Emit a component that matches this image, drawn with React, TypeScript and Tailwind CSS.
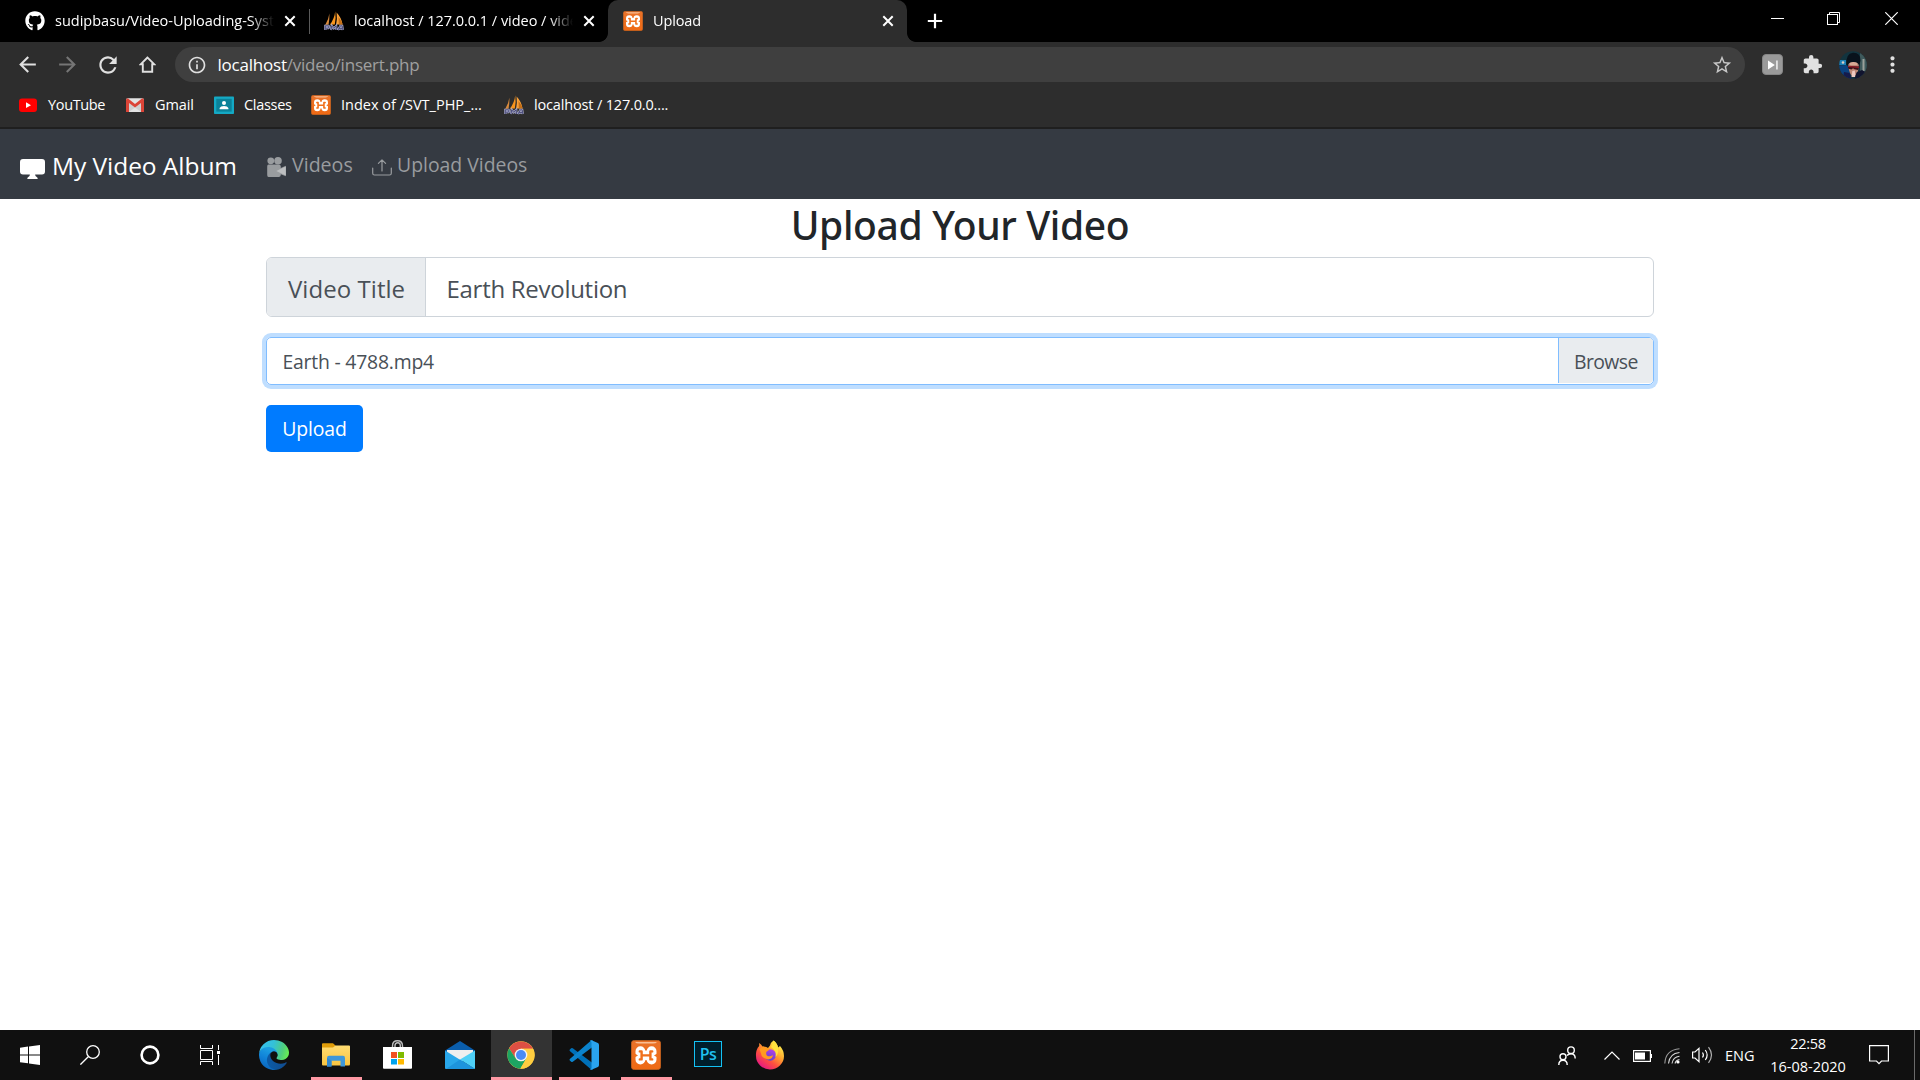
import React from 'react';
import type { ReactNode } from 'react';
import { FaGithub } from 'react-icons/fa';
import { MdArrowBack, MdArrowForward, MdRefresh, MdInfoOutline, MdStarBorder, MdExtension, MdMoreVert } from 'react-icons/md';

function XamppIcon({ className }: { className: string }) {
  return (
    <svg viewBox="0 0 30 30" className={className}>
      <defs>
        <linearGradient id="xa" x1="0" y1="0" x2="0" y2="1">
          <stop offset="0" stopColor="#e9722a" />
          <stop offset="1" stopColor="#ef6a14" />
        </linearGradient>
      </defs>
      <rect x="0.4" y="0.4" width="29.2" height="29.2" rx="3" fill="url(#xa)" stroke="#c9641f" strokeWidth="0.8" />
      <path d="M4 2H26Q25 3.6 22 3.6H8Q5 3.6 4 2Z" fill="#f9bd92" />
      <g fill="none" strokeLinecap="round" strokeLinejoin="round">
        <path d="M9.4 11.2V19.6M20.6 11.2V19.6M10 15.4H20" stroke="#fff" strokeWidth="9.8" />
        <path d="M8.8 11.4H10.6V19.4H8.8M21.2 11.4H19.4V19.4H21.2M10.6 15.4H19.4" stroke="#f0701c" strokeWidth="2.4" />
      </g>
      <path d="M3.4 13.2L7 15.4L3.4 17.6ZM26.6 13.2L23 15.4L26.6 17.6Z" fill="#f0701c" />
    </svg>
  );
}

function SailIcon() {
  return (
    <svg viewBox="0 0 20 20" className="h-5 w-5 shrink-0">
      <path d="M5.4 2.5Q5.6 8 4.6 13.5L1.2 14Q4.6 8.5 5.4 2.5Z" fill="#d98a3c" />
      <path d="M11.2 0.3Q12.3 7 10.8 13.5L5.8 13.8Q10.6 7.5 11.2 0.3Z" fill="#f7941d" />
      <path d="M12.6 1.5Q17.4 6.5 18.6 13.5H12.1Q13.4 8 12.6 1.5Z" fill="#f9a13a" />
      <path d="M14.5 6Q17.6 9.5 18.6 13.5H14.8Z" fill="#c56f16" />
      <path d="M1.3 19V14.8H4.5Q5.6 16 4.4 17.2H1.8M7 19L7.7 14.8L9.8 17.4L12.2 14.8L12.5 19M14 19L16.4 14.8H18.2L18.8 19M15 17.6H18.2" fill="none" stroke="#a9abc9" strokeWidth="2.2" />
      <path d="M1.3 19V14.8H4.5Q5.6 16 4.4 17.2H1.8M7 19L7.7 14.8L9.8 17.4L12.2 14.8L12.5 19M14 19L16.4 14.8H18.2L18.8 19M15 17.6H18.2" fill="none" stroke="#4b4c7c" strokeWidth="1" />
    </svg>
  );
}

function CloseMark() {
  return (
    <svg viewBox="0 0 12 12" className="h-3 w-3">
      <path d="M1.3 1.3L10.7 10.7M10.7 1.3L1.3 10.7" stroke="#fff" strokeWidth="2" />
    </svg>
  );
}

function Tab({ icon, title, active, divider, tracking }: { icon: ReactNode; title: string; active?: boolean; divider?: boolean; tracking: string }) {
  return (
    <div className={`relative flex h-[42px] w-[299px] shrink-0 items-center pl-[15px] ${active ? 'rounded-t-[10px] bg-[#2d2d2d]' : ''}`}>
      {icon}
      <div
        className={`ml-[10px] w-[219px] overflow-hidden text-[14.5px] leading-[22px] whitespace-nowrap text-white [mask-image:linear-gradient(to_right,#000_195px,transparent_219px)] ${tracking}`}
      >
        {title}
      </div>
      <div className="ml-[10px]">
        <CloseMark />
      </div>
      {divider && <div className="absolute top-[9px] right-[-1px] h-[25px] w-px bg-[#5a5a5a]" />}
      {active && (
        <>
          <div className="absolute bottom-0 -left-[9px] h-[9px] w-[9px] bg-[radial-gradient(circle_at_0_0,#000_8.5px,#2d2d2d_9.3px)]" />
          <div className="absolute -right-[9px] bottom-0 h-[9px] w-[9px] bg-[radial-gradient(circle_at_100%_0,#000_8.5px,#2d2d2d_9.3px)]" />
        </>
      )}
    </div>
  );
}

function TabStrip() {
  return (
    <div className="flex h-[42px] items-start bg-black pl-[10px]">
      <Tab icon={<FaGithub className="h-5 w-5 shrink-0 text-white" />} title="sudipbasu/Video-Uploading-System" divider tracking="tracking-normal" />
      <Tab icon={<SailIcon />} title="localhost / 127.0.0.1 / video / video_upload" tracking="tracking-[-0.03px]" />
      <Tab icon={<XamppIcon className="h-5 w-5 shrink-0" />} title="Upload" active tracking="tracking-[-0.15px]" />
      <svg viewBox="0 0 16 16" className="mt-[13px] ml-5 h-4 w-4">
        <path d="M8 0.8V15.2M0.8 8H15.2" stroke="#fff" strokeWidth="2.2" />
      </svg>
      <div className="ml-auto flex h-[37px] items-center">
        <div className="flex w-[57px] justify-center">
          <div className="ml-px h-px w-[13px] bg-white" />
        </div>
        <div className="flex w-[57px] justify-center">
          <svg viewBox="0 0 13 13" className="h-[13px] w-[13px]" fill="none" stroke="#fff">
            <rect x="0.5" y="2.5" width="10" height="10" />
            <path d="M2.5 2.5V0.5H12.5V10.5H10.5" />
          </svg>
        </div>
        <div className="flex w-[58px] justify-center">
          <svg viewBox="0 0 13 13" className="h-[13px] w-[13px]">
            <path d="M0.3 0.3L12.7 12.7M12.7 0.3L0.3 12.7" stroke="#fff" strokeWidth="1.2" />
          </svg>
        </div>
      </div>
    </div>
  );
}

function Cell({ children }: { children: ReactNode }) {
  return <div className="flex h-full w-10 shrink-0 items-center justify-center text-[#e0e0e0]">{children}</div>;
}

function Avatar() {
  return (
    <svg viewBox="0 0 28 28" className="h-7 w-7">
      <defs>
        <clipPath id="av">
          <circle cx="14" cy="14" r="13.8" />
        </clipPath>
      </defs>
      <g clipPath="url(#av)">
        <rect width="28" height="28" fill="#12343f" />
        <path d="M21 2H28V26H21Z" fill="#3f5a5c" />
        <path d="M23.5 8H25.5V20H23.5Z" fill="#9aa09a" />
        <path d="M0 9H7V14H0Z" fill="#1c7fb6" />
        <circle cx="4" cy="11.5" r="1.3" fill="#dccfc8" />
        <path d="M0 14.5L9 14L12 28H0Z" fill="#0b4280" />
        <path d="M9 11.500H20L19.200 19Q17.500 25 14.500 25.500Q11.500 25 10 19Z" fill="#bd8876" />
        <path d="M10.500 10.500H18.500L18 14H11Z" fill="#d9a995" />
        <path d="M7.500 14Q6.500 2.500 14 1.800Q21.500 1.500 21.500 9.500L20.300 15Q19 10.500 14 11Q9.500 11 8.700 15Z" fill="#08121c" />
        <path d="M8.500 14.800L20.500 15.600L19 19L15.500 18.300L14 17.300L12.500 18.500L9.500 17.800Z" fill="#3a1219" />
        <path d="M9 15.500L20 16.300" stroke="#a81d2b" strokeWidth="1" />
        <path d="M13.300 20L15.800 19.500L16.500 26H12.500Z" fill="#ecc9c1" />
        <path d="M17.500 21.500L23 19L28 22V28H15.500Z" fill="#11142e" />
        <path d="M5 21L10.500 22L12.500 28H4Z" fill="#151b4c" />
      </g>
    </svg>
  );
}

function Toolbar() {
  return (
    <div className="flex h-[45px] items-center bg-[#2d2d2d] pl-[7.5px]">
      <Cell><MdArrowBack className="h-[25px] w-[25px]" /></Cell>
      <Cell><MdArrowForward className="h-[25px] w-[25px] text-[#757575]" /></Cell>
      <Cell><MdRefresh className="h-[26px] w-[26px]" /></Cell>
      <Cell>
        <svg viewBox="0 0 17 17" className="h-[17px] w-[17px]">
          <path d="M8.5 1.5L1.8 8.2H3.8V15.8H13.2V8.2H15.2Z" fill="none" stroke="#e0e0e0" strokeWidth="1.9" />
        </svg>
      </Cell>
      <div className="ml-[7.5px] flex h-[35px] w-[1570px] items-center rounded-full bg-[#3f3f3f] pr-[12px] pl-[12px]">
        <MdInfoOutline className="h-[20px] w-[20px] text-[#e0e0e0]" />
        <div className="ml-[10.5px] text-[17px] leading-[24px] tracking-[-0.22px] text-[#a0a0a0]">
          <span className="text-white">localhost</span>/video/insert.php
        </div>
        <MdStarBorder className="ml-auto h-[22px] w-[22px] text-[#c8c8c8]" />
      </div>
      <div className="ml-[7.5px] flex h-full">
        <Cell>
          <div className="flex h-[21px] w-[21px] items-center justify-center rounded-[4px] border border-[#858585] bg-[#9a9a9a]">
            <svg viewBox="0 0 12 10" className="h-[10px] w-3">
              <path d="M1 0.5L7.8 5L1 9.5ZM9.3 0.6H10.6V9.4H9.3Z" fill="#fff" />
            </svg>
          </div>
        </Cell>
        <Cell><MdExtension className="h-[21px] w-[21px]" /></Cell>
        <Cell><Avatar /></Cell>
        <Cell><MdMoreVert className="h-[25px] w-[25px]" /></Cell>
      </div>
    </div>
  );
}

function Bookmark({ icon, label, className }: { icon: ReactNode; label: string; className: string }) {
  return (
    <div className={`flex shrink-0 items-center text-[14.5px] leading-[20px] whitespace-nowrap text-white ${className}`}>
      {icon}
      <span className="ml-[10px]">{label}</span>
    </div>
  );
}

function BookmarksBar() {
  return (
    <div className="flex h-[42px] items-center border-b-2 border-[#1f1f1f] bg-[#2d2d2d] pb-[4px] pl-[18px]">
      <Bookmark
        className="w-[107px] tracking-[-0.35px]"
        label="YouTube"
        icon={
          <svg viewBox="0 0 20 20" className="h-5 w-5">
            <rect x="1" y="3.5" width="18" height="13.5" rx="3" fill="#f00" />
            <path d="M8 7.3V13.1L13 10.2Z" fill="#fff" />
          </svg>
        }
      />
      <Bookmark
        className="w-[89px] tracking-[-0.1px]"
        label="Gmail"
        icon={
          <svg viewBox="0 0 20 20" className="h-5 w-5">
            <rect x="1" y="3.3" width="18" height="13.7" rx="1.5" fill="#e3e3e3" />
            <path d="M4 8L10 12.5L4 17ZM16 8L10 12.5L16 17Z" fill="#cfcfcf" />
            <path d="M1 17V5Q1 3.3 2.8 3.3L10 9L17.2 3.3Q19 3.3 19 5V17H16V8L10 12.6L4 8V17Z" fill="#db4437" />
          </svg>
        }
      />
      <Bookmark
        className="w-[97px] tracking-[-0.3px]"
        label="Classes"
        icon={
          <svg viewBox="0 0 20 20" className="h-5 w-5">
            <rect y="1.5" width="20" height="17.5" rx="0.8" fill="#14a9c4" />
            <rect x="2.3" y="3.8" width="15.4" height="12.8" fill="#0b8299" />
            <circle cx="10" cy="8" r="2" fill="#fff" />
            <path d="M5.6 14.2V13Q6.5 11 10 11Q13.5 11 14.4 13V14.2Z" fill="#fff" />
          </svg>
        }
      />
      <Bookmark className="w-[193px]" label="Index of /SVT_PHP_..." icon={<XamppIcon className="h-5 w-5 shrink-0" />} />
      <Bookmark className="tracking-[-0.16px]" label="localhost / 127.0.0...." icon={<SailIcon />} />
    </div>
  );
}

function SiteNav() {
  return (
    <nav className="flex h-[70px] items-center bg-[#353a42] pl-5">
      <svg viewBox="0 0 25 20" className="mt-[9px] h-5 w-[25px] shrink-0" fill="#fff">
        <path d="M3 0H22Q25 0 25 3V12.5Q25 15.5 22 15.5H3Q0 15.5 0 12.5V3Q0 0 3 0ZM10 15H15Q15 17.5 17 18.2Q18 19 17.6 20H7.4Q7 19 8 18.2Q10 17.5 10 15Z" />
      </svg>
      <div className="mt-[3px] ml-[7px] w-[215px] text-[24.5px] leading-[36px] tracking-[-0.05px] whitespace-nowrap text-white">My Video Album</div>
      <svg viewBox="0 0 20 20" className="mt-[5px] -ml-px h-5 w-5" fill="#999c9f">
        <circle cx="4.8" cy="3.8" r="3.4" />
        <circle cx="12" cy="3.8" r="3.8" />
        <path d="M2.5 7.5H12.8Q14.8 7.7 14.8 9.5V11L19.8 8.7V19.3L14.8 17.2V18Q14.6 20 12.8 20H2.5Q1.2 19.8 1.2 18V9.5Q1.2 7.7 2.5 7.5Z" />
        <path d="M10.3 14L19.8 9.5V18.5Z" fill="#bcbec0" />
      </svg>
      <span className="mt-[2px] ml-[6px] w-[81px] text-[19.6px] leading-[30px] text-[#999c9f]">Videos</span>
      <svg viewBox="0 0 20 17" className="mt-[6px] -ml-px h-[17px] w-5" fill="none" stroke="#999c9f" strokeWidth="1.2" strokeLinecap="round" strokeLinejoin="round">
        <path d="M0.7 9V14.2Q0.7 16 2.5 16H17.5Q19.3 16 19.3 14.2V9M10 12V1M6.4 4.4L10 0.9L13.6 4.4" />
      </svg>
      <span className="mt-[2px] ml-[5px] text-[19.4px] leading-[30px] text-[#999c9f]">Upload Videos</span>
    </nav>
  );
}

function UploadForm() {
  return (
    <main className="mx-auto flex h-[831px] w-[1388px] flex-col items-start">
      <h1 className="mt-[2px] h-[56px] w-full text-center font-['Noto_Sans'] text-[39px] leading-[48px] font-medium tracking-[-0.35px] text-[#212529]">
        Upload Your Video
      </h1>
      <div className="flex h-[60px] w-full overflow-hidden rounded-[6px] border border-[#ced4da] pb-px text-[24px] text-[#495057]">
        <div className="-mb-px flex w-[159px] items-center border-r border-[#ced4da] bg-[#e9ecef] pt-[4px] pl-[21px] tracking-[0.05px]">Video Title</div>
        <div className="-mb-px flex grow items-center pt-[4px] pl-[20.5px] tracking-[-0.28px]">Earth Revolution</div>
      </div>
      <div className="mt-5 flex h-[48px] w-full rounded-[5px] border border-[#80bdff] text-[19.4px] text-[#495057] shadow-[0_0_0_4px_#bfdeff]">
        <div className="flex grow items-center pt-[2px] pl-[15.5px] tracking-[-0.22px]">Earth - 4788.mp4</div>
        <div className="mb-px flex w-[95px] items-center rounded-r-[4px] border-l border-[#80bdff] bg-[#e9ecef] pt-[3px] pl-[15px] tracking-[-0.6px]">Browse</div>
      </div>
      <button className="mt-5 h-[47px] w-[97px] rounded-[5px] bg-[#007bff] text-[19.4px] leading-[46px] tracking-[-0.1px] text-white">Upload</button>
    </main>
  );
}

function TaskButton({ children, active, running }: { children: ReactNode; active?: boolean; running?: boolean }) {
  return (
    <div className="flex h-[50px] w-[62px] justify-center">
      <div
        className={`flex h-full items-center justify-center ${active ? '-ml-px w-[61px] bg-[#333333]' : 'w-[51px]'} ${
          running ? 'border-b-[3px] border-[#ff99a4] pt-[3px]' : ''
        }`}
      >
        {children}
      </div>
    </div>
  );
}

function EdgeIcon() {
  return (
    <svg viewBox="0 0 256 256" className="h-[30px] w-[30px]">
      <defs>
        <linearGradient id="e1" x1="0.2" y1="0.7" x2="1" y2="0.6">
          <stop offset="0" stopColor="#0c59a4" />
          <stop offset="1" stopColor="#114a8b" />
        </linearGradient>
        <linearGradient id="e2" x1="0.6" y1="0.2" x2="0.3" y2="1">
          <stop offset="0" stopColor="#1b9de2" />
          <stop offset="0.5" stopColor="#0f7fd6" />
          <stop offset="1" stopColor="#0c62b8" />
        </linearGradient>
        <linearGradient id="e3" x1="0" y1="0.3" x2="1" y2="0.5">
          <stop offset="0" stopColor="#35c1f1" />
          <stop offset="0.45" stopColor="#34c1d8" />
          <stop offset="0.8" stopColor="#4fce7d" />
          <stop offset="1" stopColor="#66eb55" />
        </linearGradient>
      </defs>
      <path d="M231 190.5a93 93 0 0 1-10.500 4.700 101.900 101.900 0 0 1-35.900 6.500c-47.300 0-88.500-32.500-88.500-74.300a31.500 31.500 0 0 1 16.400-27.300c-42.800 1.800-53.800 46.400-53.800 72.500 0 73.900 68.100 81.400 82.800 81.400 7.900 0 19.800-2.300 27-4.500l1.300-.5a128.300 128.300 0 0 0 66.600-52.800 4 4 0 0 0-5.400-5.700z" fill="url(#e1)" />
      <path d="M105.700 241.400a79.200 79.200 0 0 1-22.700-21.300 80.700 80.700 0 0 1 29.500-120c3.200-1.500 8.500-4.100 15.600-4a32.400 32.400 0 0 1 25.700 13 31.900 31.900 0 0 1 6.300 18.700c0-.2 24.500-79.600-80-79.600-43.900 0-80 41.700-80 78.200a130.200 130.200 0 0 0 12.100 56 128 128 0 0 0 156.400 67 75.500 75.500 0 0 1-62.800-8z" fill="url(#e2)" />
      <path d="M152.300 148.900c-.8 1-3.300 2.500-3.300 5.700 0 2.600 1.700 5.100 4.700 7.200 14.400 10 41.500 8.700 41.600 8.700a59.600 59.600 0 0 0 30.300-8.300 61.400 61.400 0 0 0 30.400-52.900c.3-22.400-8-37.300-11.300-43.900C223.500 23.900 177.700 0 128 0A128 128 0 0 0 0 126.200c.5-36.500 36.800-66 80-66 3.500 0 23.500.3 42 10.100 16.300 8.600 24.900 18.900 30.800 29.200 6.200 10.700 7.300 24.100 7.300 29.500 0 5.300-2.700 13.300-7.800 19.900z" fill="url(#e3)" />
    </svg>
  );
}

function ChromeIcon() {
  return (
    <svg viewBox="0 0 28 28" className="mr-px h-7 w-7">
      <circle cx="14" cy="14" r="13.700" fill="#ffcd40" />
      <path d="M14 14L8.400 17.200L2.100 7.200A13.700 13.700 0 0 1 26 7.700H14Z" fill="#dd4f43" />
      <path d="M2.100 7.200L8.500 17.200L14 20.300L19.500 17.200L13.300 27.700A13.700 13.700 0 0 1 2.100 7.200Z" fill="#1da462" />
      <path d="M14 7.700H26A13.700 13.700 0 0 1 13.300 27.700L19.500 17.200Z" fill="#ffcd40" />
      <circle cx="14" cy="14" r="6.300" fill="#f3f3f3" />
      <circle cx="14" cy="14" r="5" fill="#4a8af4" />
    </svg>
  );
}

function FirefoxIcon() {
  return (
    <svg viewBox="0 0 30 30" className="h-[30px] w-[30px]">
      <defs>
        <linearGradient id="f1" x1="0.85" y1="0.1" x2="0.2" y2="0.95">
          <stop offset="0" stopColor="#fff44f" />
          <stop offset="0.35" stopColor="#ffa62e" />
          <stop offset="0.65" stopColor="#ff4f3f" />
          <stop offset="1" stopColor="#e31587" />
        </linearGradient>
        <linearGradient id="f2" x1="0.7" y1="0" x2="0.3" y2="1">
          <stop offset="0" stopColor="#b340e8" />
          <stop offset="1" stopColor="#5b40cf" />
        </linearGradient>
      </defs>
      <path d="M18.500 0.500Q22.500 3.500 23 7.500L25 6Q29 10.500 29 16A14 13.500 0 0 1 1 16Q0.500 10 4.200 6V3Q6.500 4.500 7.500 6.500Q11 6 13 8L15 5.500Q15.500 2.500 18.500 0.500Z" fill="url(#f1)" />
      <circle cx="15.300" cy="15" r="5.800" fill="url(#f2)" />
      <path d="M3 5L4.500 9L8 6.500Q11 8 14.500 8.500Q14.500 10.500 11.500 11.800Q10.500 14.500 12.500 16Q15 17 18 15Q17.500 19 13 19.500Q6.500 19 5.500 12Z" fill="#ff9a1f" />
      <path d="M16 7Q19 1.500 18.500 0.500Q22.500 3.500 23 8Q24 14 20.500 17Q22 11 16 7Z" fill="#ffe03d" />
    </svg>
  );
}

function Taskbar() {
  return (
    <footer className="flex h-[50px] bg-[#101010]">
      <div className="flex w-[60px] items-center justify-center">
        <svg viewBox="0 0 20 20" className="h-5 w-5" fill="#fff">
          <path d="M0 2.700L8 1.600V9.400H0ZM9 1.500L20 0V9.400H9ZM0 10.500H8V18.300L0 17.200ZM9 10.500H20V20L9 18.500Z" />
        </svg>
      </div>
      <div className="flex w-[60px] items-center justify-center">
        <svg viewBox="0 0 20 20" className="h-5 w-5" fill="none" stroke="#fff" strokeWidth="1.300">
          <circle cx="13" cy="7" r="6.300" />
          <path d="M8.500 11.500L0.400 19.600" />
        </svg>
      </div>
      <div className="flex w-[60px] items-center justify-center">
        <svg viewBox="0 0 20 20" className="h-5 w-5">
          <circle cx="10" cy="10" r="8.400" fill="none" stroke="#fff" strokeWidth="2.600" />
        </svg>
      </div>
      <div className="flex w-[60px] items-center justify-center">
        <svg viewBox="0 0 20 20" className="h-5 w-5" fill="none" stroke="#fff">
          <path d="M0.500 0V3.500H12.500V0M0.500 20V16.500H12.500V20M0.500 5.500H12.500V14.500H0.500ZM18.500 0V5M18.500 10V20" />
          <rect x="17" y="6" width="3" height="3" fill="#fff" stroke="none" />
        </svg>
      </div>
      <div className="ml-[3px] flex">
        <TaskButton><EdgeIcon /></TaskButton>
        <TaskButton running>
          <svg viewBox="0 0 28 24" className="mr-px h-6 w-7">
            <defs>
              <linearGradient id="fo" x1="0" y1="0" x2="0" y2="1">
                <stop offset="0" stopColor="#ffdc72" />
                <stop offset="1" stopColor="#f9c440" />
              </linearGradient>
            </defs>
            <path d="M0 1Q0 0.300 1 0.300H11L13.500 2.500V8H0Z" fill="#e09d09" />
            <path d="M0 4.500H11L13.500 2.500H27Q28 2.500 28 3.500V21Q28 22.500 27 22.500H1Q0 22.500 0 21.500Z" fill="url(#fo)" />
            <path d="M5 23.500V15Q5 12.700 7 12.700H21Q23 12.700 23 15V23.500H18.500V17.800H9.500V23.500Z" fill="#3e97d9" />
            <path d="M5 22.500V15L9.500 17.800V23.500H5Z" fill="#3288cf" />
          </svg>
        </TaskButton>
        <TaskButton>
          <svg viewBox="0 0 29 29" className="mr-[2px] mb-px h-[29px] w-[29px]">
            <path d="M9.500 8V6Q9.500 0.800 14.500 0.800Q19.500 0.800 19.500 6V8M12 8V5.500Q12 2.700 14.800 2.700Q17.300 2.700 17.300 5.500V8" fill="none" stroke="#bdbdbd" strokeWidth="1.400" />
            <path d="M0 7H29V28Q29 28.800 28 28.800H1Q0 28.800 0 28Z" fill="#fff" />
            <path d="M8 12H14V18H8Z" fill="#f25022" />
            <path d="M15 12H21V18H15Z" fill="#7fba00" />
            <path d="M8 19H14V24.500H8Z" fill="#00a4ef" />
            <path d="M15 19H21V24.500H15Z" fill="#ffb900" />
          </svg>
        </TaskButton>
        <TaskButton>
          <svg viewBox="0 0 30 28" className="h-7 w-[30px]">
            <path d="M0 9.500L15 0L30 9.500V12H0Z" fill="#0a5dab" />
            <path d="M2 9H28V20H2Z" fill="#efefef" />
            <path d="M0 9.500L30 28H1Q0 28 0 27Z" fill="#29a7ea" />
            <path d="M30 9.500V28L15 18.500Z" fill="#4fd0f7" />
            <path d="M15 18.500L30 28H1Z" fill="#1d94dd" />
          </svg>
        </TaskButton>
        <TaskButton active running><ChromeIcon /></TaskButton>
        <TaskButton running>
          <svg viewBox="0 0 30 30" className="h-[30px] w-[30px]">
            <path d="M0.800 9.500L2.200 8.200Q3 7.700 3.800 8.300L23.500 23V30L21.500 29L0.800 11Q0.200 10.200 0.800 9.500Z" fill="#0070b8" />
            <path d="M0.800 20.500L2.200 21.800Q3 22.300 3.800 21.700L23.500 7V0L21.500 1L0.800 19Q0.200 19.800 0.800 20.500Z" fill="#0b83cc" />
            <path d="M22.500 0.200L28.900 3Q30 3.600 30 5V25Q30 26.400 28.900 27L22.500 29.800Q21.300 30 20.800 29Q22.500 29.300 22.500 27.500V2.500Q22.500 0.700 20.800 1Q21.300 0 22.500 0.200Z" fill="#2aa4ef" />
          </svg>
        </TaskButton>
        <TaskButton running><XamppIcon className="h-[30px] w-[30px]" /></TaskButton>
        <TaskButton>
          <div className="mb-[3px] flex h-[26px] w-7 items-center justify-center border border-[#14c2f5] bg-[#001e2b] text-[16px] leading-none font-semibold tracking-[-0.600px] text-[#1fc0f0] outline-1 -outline-offset-1 outline-[#14c2f5]">
            Ps
          </div>
        </TaskButton>
        <TaskButton><FirefoxIcon /></TaskButton>
      </div>
      <div className="ml-auto flex items-center text-[14.500px] text-white">
        <svg viewBox="0 0 18 19" className="mr-[28px] h-[19px] w-[18px]" fill="none" stroke="#fff" strokeWidth="1.400">
          <circle cx="13" cy="4.200" r="3.300" />
          <circle cx="5" cy="10.700" r="3" />
          <path d="M0.800 19Q0.800 14.200 5 14.200Q9.200 14.200 9.200 19M9 9.500Q10.500 7.700 13 7.700Q17.200 7.700 17.200 12.500" />
        </svg>
        <svg viewBox="0 0 16 9" className="mr-[13px] h-[9px] w-4" fill="none" stroke="#fff" strokeWidth="1.200">
          <path d="M0.500 8.500L8 1L15.500 8.500" />
        </svg>
        <svg viewBox="0 0 19 12" className="mt-px mr-[12px] h-3 w-[19px]">
          <rect x="0.600" y="0.600" width="16.800" height="10.800" fill="none" stroke="#fff" strokeWidth="1.200" />
          <path d="M2 2.500H12V9.500H2ZM18 4H19V8H18Z" fill="#fff" />
        </svg>
        <svg viewBox="0 0 17 16" className="mt-[2px] mr-[11px] h-4 w-[17px]" fill="none" stroke="#d8d8d8" strokeWidth="1.100">
          <path d="M0.800 15.500Q1.500 2 15.500 0.800" stroke="#9a9a9a" />
          <path d="M4.500 15.500Q5.500 5.500 15.500 4.500M8 15.500Q9 9 15.500 8.200M11 15.500Q12 12 15.500 11.600" />
          <circle cx="14" cy="14" r="1.600" fill="#fff" stroke="none" />
        </svg>
        <svg viewBox="0 0 21 18" className="mr-[12px] h-[18px] w-[21px]" fill="none" stroke="#fff" strokeWidth="1.200">
          <path d="M0.600 6H3L7 2.300V15.700L3 12H0.600Z" />
          <path d="M10.500 6.500Q12.300 9 10.500 11.500M13.300 4Q17 9 13.300 14" />
          <path d="M16.500 1.200Q22.500 9 16.500 16.800" stroke="#b0b0b0" />
        </svg>
        <span className="mt-px w-[45px]">ENG</span>
        <div className="flex h-full w-[76px] flex-col items-center text-center leading-[22.500px] whitespace-nowrap">
          <span className="mt-[3px] tracking-[-0.250px]">22:58</span>
          <span>16-08-2020</span>
        </div>
        <svg viewBox="0 0 20 20" className="ml-[23px] h-5 w-5" fill="none" stroke="#fff" strokeWidth="1.200">
          <path d="M0.600 0.600H19.400V16H12.500L10 18.700L7.500 16H0.600Z" />
        </svg>
        <div className="mr-[5px] ml-[25px] h-full w-px bg-[#6a6a6a]" />
      </div>
    </footer>
  );
}

export default function App() {
  return (
    <div className="flex h-[1080px] w-[1920px] flex-col overflow-hidden bg-white font-['Open_Sans','Noto_Sans',sans-serif]">
      <TabStrip />
      <Toolbar />
      <BookmarksBar />
      <SiteNav />
      <UploadForm />
      <Taskbar />
    </div>
  );
}
